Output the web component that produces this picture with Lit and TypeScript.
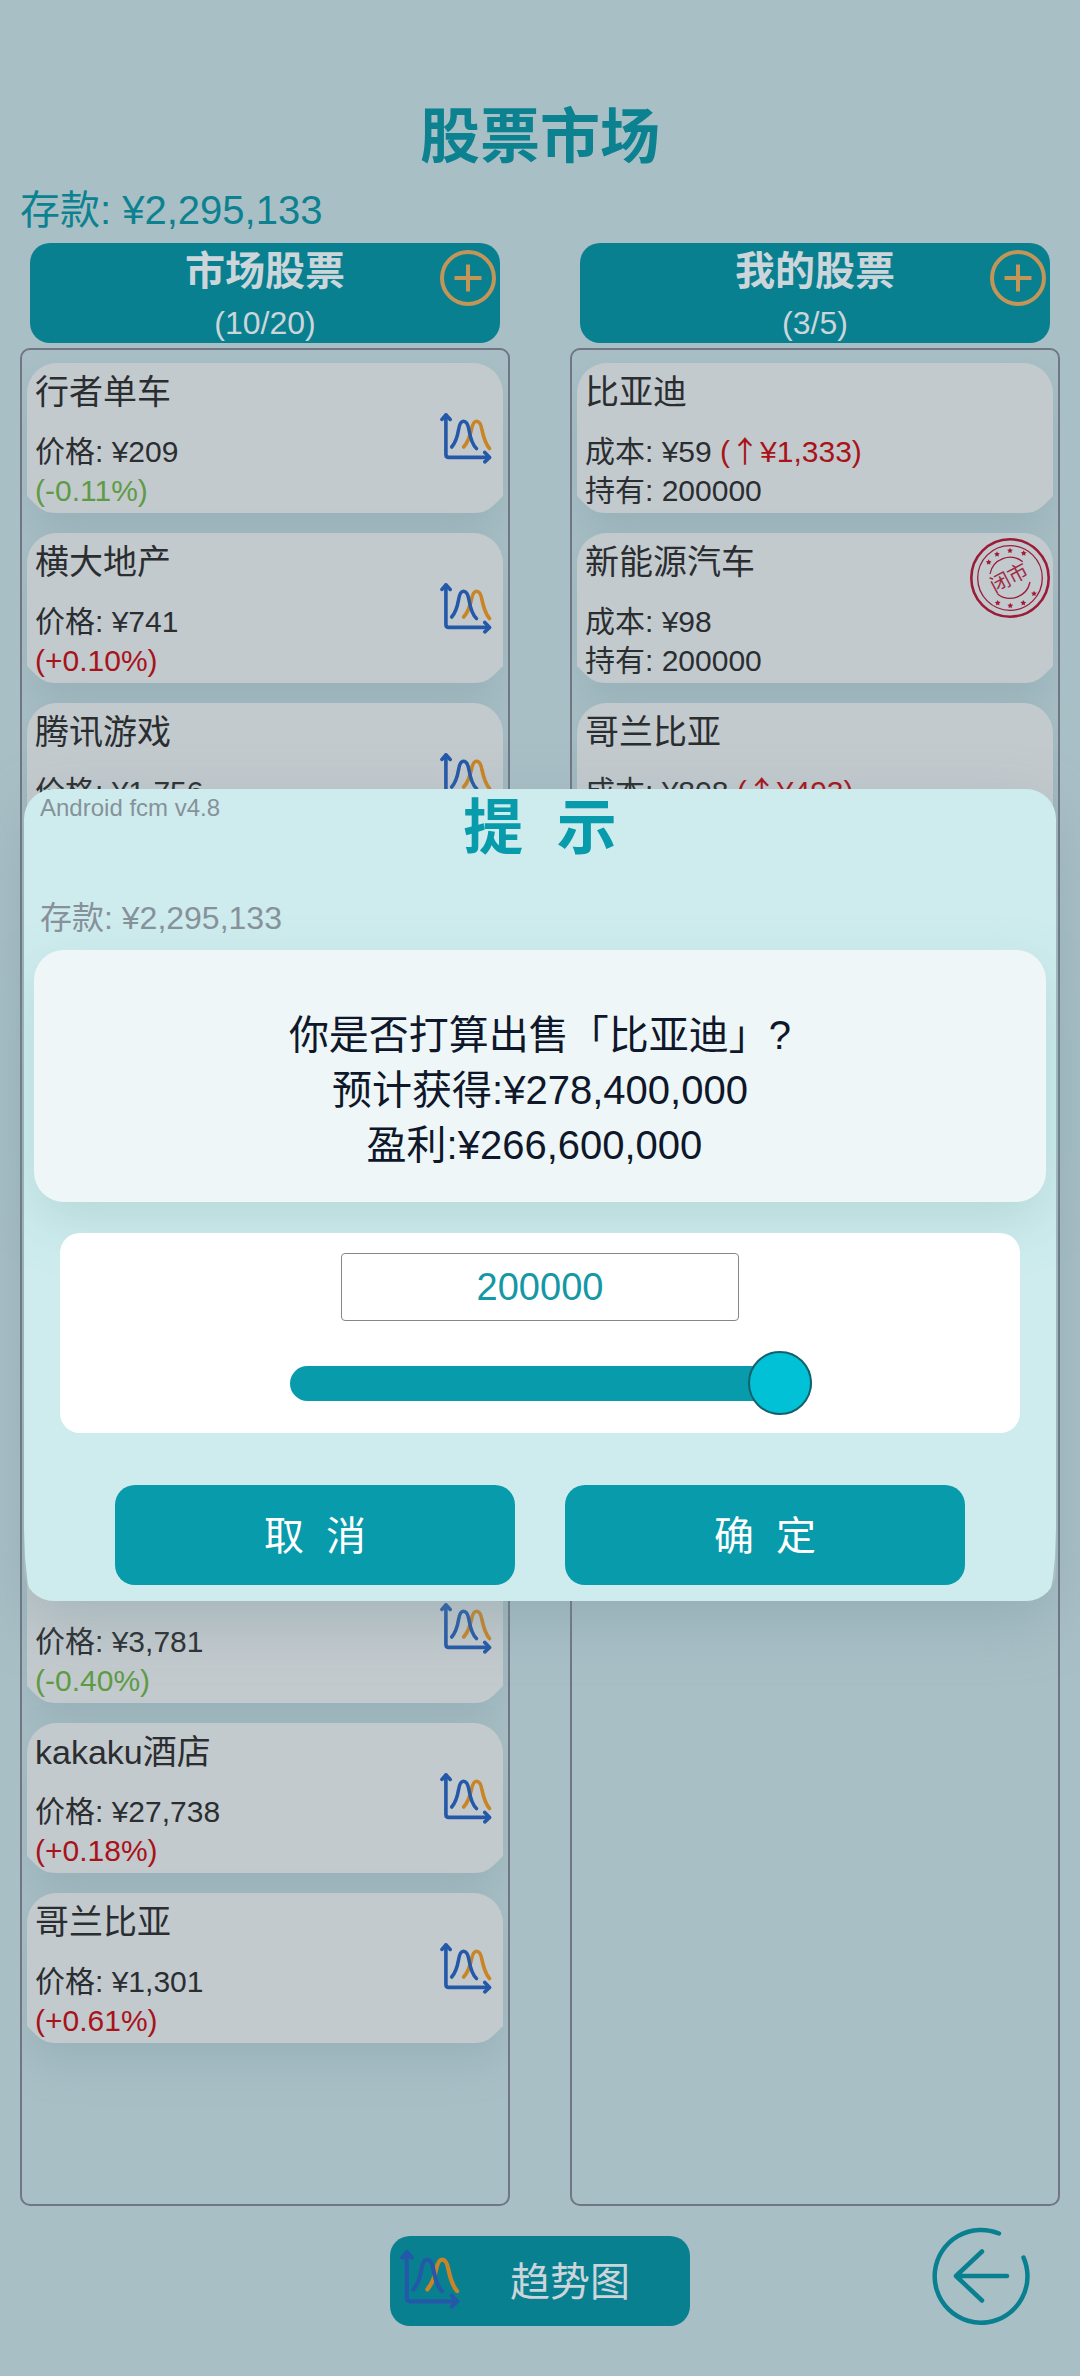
import { LitElement, html, css, svg, nothing } from "lit";
import { customElement, property, state } from "lit/decorators.js";

interface Quote {
  name?: string;
  price?: string;
  change?: string;
}

interface Holding {
  name: string;
  cost: string;
  gain?: string;
  held?: string;
  closed?: boolean;
}

const QUOTES: Quote[] = [
  { name: "行者单车", price: "¥209", change: "-0.11%" },
  { name: "横大地产", price: "¥741", change: "+0.10%" },
  { name: "腾讯游戏", price: "¥1,756" },
  {},
  {},
  {},
  {},
  { price: "¥3,781", change: "-0.40%" },
  { name: "kakaku酒店", price: "¥27,738", change: "+0.18%" },
  { name: "哥兰比亚", price: "¥1,301", change: "+0.61%" },
];

const HOLDINGS: Holding[] = [
  { name: "比亚迪", cost: "¥59", gain: "¥1,333", held: "200000" },
  { name: "新能源汽车", cost: "¥98", held: "200000", closed: true },
  { name: "哥兰比亚", cost: "¥808", gain: "¥493" },
];

@customElement("chart-icon")
class ChartIcon extends LitElement {
  static styles = css`
    :host {
      display: block;
    }
    .icon {
      display: block;
      width: 100%;
      height: 100%;
      fill: none;
      stroke-width: 3.6;
      stroke-linecap: round;
      stroke-linejoin: round;
    }
    .blue {
      stroke: #2458a8;
    }
    .orange {
      stroke: #c98425;
    }
  `;

  render() {
    return html`<svg class="icon" viewBox="0 0 52 52" aria-hidden="true">
      <path class="orange" d="M23.7 35C28 30 30 24 31.3 18C32.6 11.5 34 9.2 36.5 9.2C39.5 9.2 41 12 42 18C43.5 25 45.5 32 49.5 36.5" />
      <path class="blue" d="M11.7 35C16 30 17.5 24 18.5 18C19.5 11.5 21 9.2 23.5 9.2C26.5 9.2 28 12 29 18C30.2 25 32 32.5 36.5 36.5" />
      <path class="blue" d="M5.9 3V42.5Q5.9 45.4 8.8 45.4H49" />
      <path class="blue" d="M2 7.4L5.9 2.8L10.2 7.4M44.8 40.4L49.6 45.4L44.8 49.8" />
    </svg>`;
  }
}

@customElement("closed-stamp")
class ClosedStamp extends LitElement {
  static styles = css`
    :host {
      display: block;
    }
    .stamp {
      display: block;
      width: 100%;
      height: 100%;
      overflow: visible;
    }
    .ring {
      fill: none;
      stroke: #9c1c38;
    }
    .outer {
      stroke-width: 2.6;
    }
    .thin {
      stroke-width: 1.3;
    }
    .star {
      fill: #9c1c38;
    }
    .word {
      fill: #a02a44;
      font-family: "Liberation Sans", "Noto Sans CJK SC", sans-serif;
      font-size: 20px;
      text-anchor: middle;
    }
  `;

  private stars = [
    [-21.3, -15.7],
    [-13, -23.7],
    [0, -27.3],
    [13.7, -24.7],
    [24, 15.7],
    [13.3, 25],
    [0.3, 27.7],
    [-12.3, 25],
  ];

  render() {
    return html`<svg class="stamp" viewBox="-40 -40 80 80">
      <circle class="ring outer" r="38.7" />
      <circle class="ring thin" r="32.3" />
      <path class="ring thin" d="M-20 -4A20.4 20.4 0 0 1 12.7 -16.3" />
      <path class="ring thin" d="M20 4A20.4 20.4 0 0 1 -12.5 16" />
      ${this.stars.map(
        ([x, y]) => svg`<path class="star" transform="translate(${x} ${y})"
          d="M0 -3L0.9 -1.2L2.9 -0.9L1.4 0.5L1.8 2.4L0 1.5L-1.8 2.4L-1.4 0.5L-2.9 -0.9L-0.9 -1.2Z" />`
      )}
      <text class="word" transform="translate(-1 0) rotate(-28)" x="0" y="7">闭市</text>
    </svg>`;
  }
}

@customElement("column-header")
class ColumnHeader extends LitElement {
  @property() heading = "";
  @property() count = "";

  static styles = css`
    :host {
      display: block;
    }
    .bar {
      display: grid;
      grid-template-columns: 56px 1fr 56px;
      min-height: 100px;
      padding: 0 4px;
      border-radius: 20px;
      background: #088090;
      color: #ccd5da;
    }
    .words {
      grid-column: 2;
      display: flex;
      flex-direction: column;
      justify-content: space-between;
      text-align: center;
    }
    .heading {
      margin: 0;
      font-size: 40px;
      line-height: 56px;
      font-weight: 700;
    }
    .count {
      font-size: 32px;
      line-height: 40px;
    }
    .add {
      width: 56px;
      height: 56px;
      margin: 7px 0 0;
      padding: 0;
      border: 0;
      background: none;
      cursor: pointer;
    }
    .plus {
      display: block;
      fill: none;
      stroke: #c39557;
      stroke-width: 4;
    }
  `;

  render() {
    return html`<div class="bar">
      <div class="words">
        <h2 class="heading">${this.heading}</h2>
        <span class="count">${this.count}</span>
      </div>
      <button class="add" aria-label="+">
        <svg class="plus" viewBox="0 0 56 56" aria-hidden="true">
          <circle cx="28" cy="28" r="26" />
          <path d="M28 14.5V41.5M14.5 28H41.5" />
        </svg>
      </button>
    </div>`;
  }
}

@customElement("stock-card")
class StockCard extends LitElement {
  @property() name = "";
  @property({ type: Boolean }) chart = false;
  @property({ type: Boolean }) closed = false;

  static styles = css`
    :host {
      display: block;
    }
    .card {
      position: relative;
      isolation: isolate;
      display: flex;
      align-items: center;
      gap: 8px;
      min-height: 150px;
      box-sizing: border-box;
      padding: 3px 11px 3px 8px;
      border-radius: 30px;
      box-shadow: 0 20px 40px rgba(110, 145, 150, 0.28);
      color: #2b2e31;
    }
    .card::before {
      content: "";
      position: absolute;
      inset: 0;
      z-index: -1;
      border-radius: 30px 30px 0 0;
      background: #c3cace;
      clip-path: polygon(
        0 0,
        100% 0,
        100% calc(100% - 17px),
        calc(100% - 9px) calc(100% - 8px),
        calc(100% - 14px) calc(100% - 4px),
        calc(100% - 20px) calc(100% - 1px),
        calc(100% - 28px) 100%,
        28px 100%,
        20px calc(100% - 1px),
        14px calc(100% - 4px),
        9px calc(100% - 8px),
        0 calc(100% - 17px)
      );
    }
    .text {
      flex: 1;
      min-width: 0;
      align-self: flex-start;
      padding-top: 5px;
    }
    .name {
      min-height: 42px;
      margin: 0 0 19px;
      font-size: 34px;
      line-height: 42px;
      font-weight: 400;
    }
    .lines {
      font-size: 30px;
      line-height: 39px;
    }
    .open {
      width: 52px;
      height: 52px;
      padding: 0;
      border: 0;
      background: none;
      cursor: pointer;
    }
    .stamp {
      position: absolute;
      top: 5px;
      right: 3px;
      width: 80px;
      height: 80px;
    }
  `;

  render() {
    return html`<article class="card">
      <div class="text">
        <h3 class="name">${this.name}</h3>
        <div class="lines"><slot></slot></div>
      </div>
      ${this.chart
        ? html`<button class="open" aria-label="趋势图"><chart-icon></chart-icon></button>`
        : nothing}
      ${this.closed ? html`<closed-stamp class="stamp"></closed-stamp>` : nothing}
    </article>`;
  }
}

@customElement("sell-dialog")
class SellDialog extends LitElement {
  @state() private amount = 200000;

  private setAmount(e: Event) {
    const n = Number((e.target as HTMLInputElement).value);
    if (!Number.isNaN(n)) this.amount = Math.max(0, Math.min(200000, n));
  }

  static styles = css`
    :host {
      display: block;
      width: 100%;
    }
    .dialog {
      position: relative;
      isolation: isolate;
      padding-bottom: 16px;
      border-radius: 30px;
      box-shadow: 0 20px 60px rgba(110, 145, 150, 0.36);
    }
    .dialog::before {
      content: "";
      position: absolute;
      inset: 0;
      z-index: -1;
      border-radius: 30px;
      background: #ceecee;
      clip-path: polygon(
        0 0,
        100% 0,
        100% calc(100% - 72px),
        calc(100% - 1px) calc(100% - 44px),
        calc(100% - 3px) calc(100% - 24px),
        calc(100% - 5px) calc(100% - 13px),
        calc(100% - 5px) 100%,
        5px 100%,
        5px calc(100% - 13px),
        3px calc(100% - 24px),
        1px calc(100% - 44px),
        0 calc(100% - 72px)
      );
    }
    .head {
      display: grid;
      grid-template-columns: 1fr auto 1fr;
      padding: 0 16px;
    }
    .version {
      color: #87919a;
      font-size: 24px;
      line-height: 38px;
    }
    .title {
      margin: 0;
      color: #089bab;
      font-size: 60px;
      line-height: 80px;
      font-weight: 700;
    }
    .deposit {
      margin: 28px 16px 11px;
      color: #87919a;
      font-size: 32px;
      line-height: 42px;
    }
    .info {
      margin: 0 10px;
      padding: 58px 20px 29px;
      border-radius: 30px;
      background: #eef6f8;
      box-shadow: 0 20px 50px rgba(140, 180, 180, 0.35);
      color: #0f172a;
      font-size: 40px;
      line-height: 55px;
      text-align: center;
    }
    .line {
      margin: 0;
    }
    .amount {
      position: relative;
      display: flex;
      flex-direction: column;
      align-items: center;
      gap: 30px;
      margin: 31px 36px 52px;
      padding: 20px 20px 18px;
      border-radius: 20px;
      background: #fff;
    }
    .field {
      box-sizing: border-box;
      width: 398px;
      height: 68px;
      padding: 0;
      border: 1px solid #85888b;
      border-radius: 4px;
      background: #fff;
      color: #1497a6;
      font: 38px "Liberation Sans", sans-serif;
      text-align: center;
    }
    .rail {
      width: 500px;
      height: 64px;
    }
    .slider {
      appearance: none;
      display: block;
      width: calc(100% + 22px);
      height: 64px;
      margin: 0;
      background: none;
    }
    .slider::-webkit-slider-runnable-track {
      height: 35px;
      border-radius: 18px;
      background: #089bab;
    }
    .slider::-webkit-slider-thumb {
      appearance: none;
      box-sizing: border-box;
      width: 64px;
      height: 64px;
      margin-top: -15px;
      border: 2px solid #14616c;
      border-radius: 50%;
      background: #00c1d6;
    }
    .actions {
      display: flex;
      justify-content: center;
      gap: 50px;
      padding: 0 20px;
    }
    .action {
      flex: 0 1 400px;
      height: 100px;
      padding: 0 0 4px;
      border: 0;
      border-radius: 20px;
      background: #089bab;
      color: #fff;
      font: 40px "Liberation Sans", "Noto Sans CJK SC", sans-serif;
      cursor: pointer;
    }
  `;

  render() {
    return html`<section class="dialog" role="dialog" aria-modal="true" aria-labelledby="title">
      <header class="head">
        <span class="version">Android fcm v4.8</span>
        <h2 class="title" id="title">提&nbsp;&nbsp;示</h2>
      </header>
      <p class="deposit">存款: ¥2,295,133</p>
      <div class="info">
        <p class="line">你是否打算出售「比亚迪」?</p>
        <p class="line">预计获得:¥278,400,000</p>
        <p class="line">盈利:¥266,600,000&nbsp;</p>
      </div>
      <div class="amount">
        <input class="field" type="text" inputmode="numeric" aria-label="持有"
          .value=${String(this.amount)} @change=${this.setAmount} />
        <div class="rail">
          <input class="slider" type="range" min="0" max="200000" aria-label="持有"
            .value=${String(this.amount)} @input=${this.setAmount} />
        </div>
      </div>
      <div class="actions">
        <button class="action">取&nbsp;&nbsp;消</button>
        <button class="action">确&nbsp;&nbsp;定</button>
      </div>
    </section>`;
  }
}

@customElement("app-root")
class AppRoot extends LitElement {
  static styles = css`
    :host {
      display: block;
      font-family: "Liberation Sans", "Noto Sans CJK SC", sans-serif;
    }
    .page {
      position: relative;
      display: flex;
      flex-direction: column;
      min-height: 100vh;
      box-sizing: border-box;
      padding: 90px 20px 50px;
      background: #a9bfc6;
      color: #0c8291;
      overflow: hidden;
    }
    .title {
      margin: 0;
      font-size: 60px;
      line-height: 96px;
      font-weight: 700;
      text-align: center;
    }
    .deposit {
      margin: 0 0 9px;
      font-size: 40px;
      line-height: 48px;
    }
    .columns {
      flex: 1;
      display: grid;
      grid-template-columns: 1fr 1fr;
      gap: 60px;
    }
    .column {
      display: flex;
      flex-direction: column;
      gap: 5px;
      min-width: 0;
    }
    .header {
      margin: 0 10px;
    }
    .list {
      flex: 1;
      display: flex;
      flex-direction: column;
      gap: 20px;
      padding: 13px 5px;
      border: 2px solid #707684;
      border-radius: 10px;
      overflow: hidden;
    }
    .up {
      color: #a8131a;
    }
    .down {
      color: #5f9b45;
    }
    .arrow {
      font-family: "Noto Sans CJK SC", sans-serif;
      line-height: 1;
    }
    .footer {
      display: grid;
      grid-template-columns: 1fr auto 1fr;
      align-items: center;
      min-height: 100px;
      margin-top: 20px;
    }
    .trend {
      grid-column: 2;
      align-self: end;
      display: flex;
      align-items: center;
      gap: 50px;
      width: 300px;
      height: 90px;
      padding: 0 10px 4px;
      border: 0;
      border-radius: 20px;
      background: #088090;
      color: #ccd5da;
      font: 40px "Liberation Sans", "Noto Sans CJK SC", sans-serif;
      cursor: pointer;
    }
    .trend-icon {
      width: 60px;
      height: 60px;
    }
    .back {
      justify-self: end;
      width: 98px;
      height: 98px;
      margin-right: 30px;
      padding: 0;
      border: 0;
      background: none;
      cursor: pointer;
    }
    .back-icon {
      display: block;
      fill: none;
      stroke: #088090;
      stroke-width: 4.5;
      stroke-linecap: round;
      stroke-linejoin: round;
    }
    .overlay {
      position: absolute;
      inset: 0;
      display: flex;
      align-items: center;
      padding: 14px 24px 0;
      color: #0f172a;
    }
  `;

  private change(c: string) {
    return html`<span class=${c.startsWith("-") ? "down" : "up"}>(${c})</span>`;
  }

  render() {
    return html`<main class="page">
      <h1 class="title">股票市场</h1>
      <p class="deposit">存款: ¥2,295,133</p>
      <div class="columns">
        <section class="column">
          <column-header class="header" heading="市场股票" count="(10/20)"></column-header>
          <div class="list">
            ${QUOTES.map(
              (q) => html`<stock-card .name=${q.name ?? ""} chart>
                ${q.price ? html`<div>价格: ${q.price}</div>` : nothing}
                ${q.change ? this.change(q.change) : nothing}
              </stock-card>`
            )}
          </div>
        </section>
        <section class="column">
          <column-header class="header" heading="我的股票" count="(3/5)"></column-header>
          <div class="list">
            ${HOLDINGS.map(
              (h) => html`<stock-card .name=${h.name} ?closed=${h.closed}>
                <div>成本: ${h.cost}
                  ${h.gain
                    ? html`<span class="up">(<span class="arrow">↑</span>${h.gain})</span>`
                    : nothing}
                </div>
                ${h.held ? html`<div>持有: ${h.held}</div>` : nothing}
              </stock-card>`
            )}
          </div>
        </section>
      </div>
      <footer class="footer">
        <button class="trend"><chart-icon class="trend-icon"></chart-icon>趋势图</button>
        <button class="back" aria-label="←">
          <svg class="back-icon" viewBox="0 0 98 98" aria-hidden="true">
            <path d="M67 6.5A46.4 46.4 0 1 0 91.5 30.5" />
            <path d="M75 49H24M50 24.5L24 49L50 73.5" />
          </svg>
        </button>
      </footer>
      <div class="overlay"><sell-dialog></sell-dialog></div>
    </main>`;
  }
}
